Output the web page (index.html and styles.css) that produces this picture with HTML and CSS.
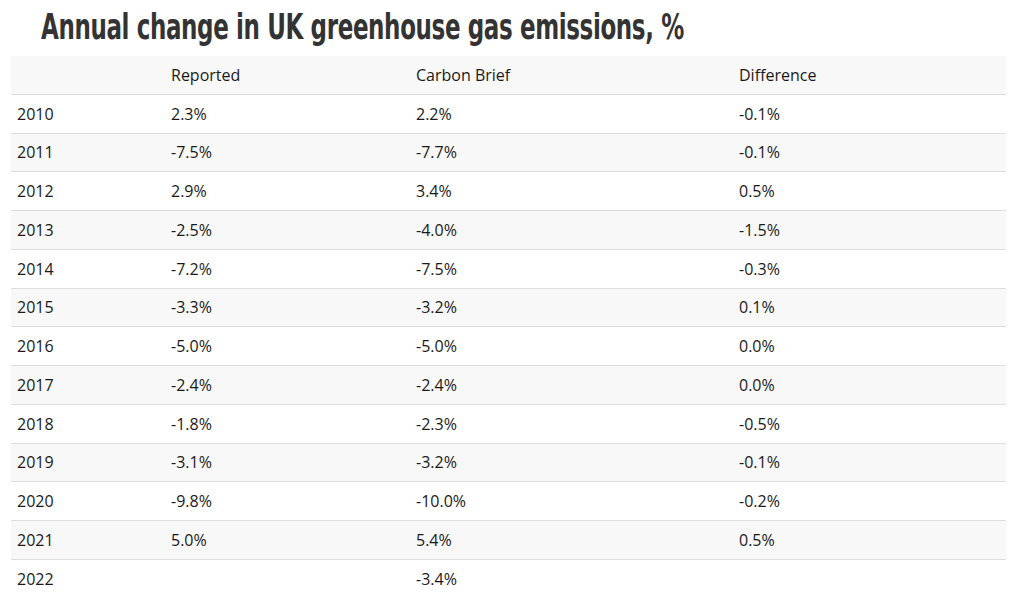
FILE: index.html
```html
<!DOCTYPE html>
<html>
<head>
<meta charset="utf-8">
<link rel="stylesheet" href="styles.css">
</head>
<body>
<h1 class="title"><span class="title-text">Annual change in UK greenhouse gas emissions, %</span></h1>
<table class="data">
<colgroup><col class="c1"><col class="c2"><col class="c3"><col class="c4"></colgroup>
<thead><tr><th></th><th>Reported</th><th>Carbon Brief</th><th>Difference</th></tr></thead>
<tbody>
<tr><td>2010</td><td>2.3%</td><td>2.2%</td><td>-0.1%</td></tr>
<tr><td>2011</td><td>-7.5%</td><td>-7.7%</td><td>-0.1%</td></tr>
<tr><td>2012</td><td>2.9%</td><td>3.4%</td><td>0.5%</td></tr>
<tr><td>2013</td><td>-2.5%</td><td>-4.0%</td><td>-1.5%</td></tr>
<tr><td>2014</td><td>-7.2%</td><td>-7.5%</td><td>-0.3%</td></tr>
<tr><td>2015</td><td>-3.3%</td><td>-3.2%</td><td>0.1%</td></tr>
<tr><td>2016</td><td>-5.0%</td><td>-5.0%</td><td>0.0%</td></tr>
<tr><td>2017</td><td>-2.4%</td><td>-2.4%</td><td>0.0%</td></tr>
<tr><td>2018</td><td>-1.8%</td><td>-2.3%</td><td>-0.5%</td></tr>
<tr><td>2019</td><td>-3.1%</td><td>-3.2%</td><td>-0.1%</td></tr>
<tr><td>2020</td><td>-9.8%</td><td>-10.0%</td><td>-0.2%</td></tr>
<tr><td>2021</td><td>5.0%</td><td>5.4%</td><td>0.5%</td></tr>
<tr><td>2022</td><td></td><td>-3.4%</td><td></td></tr>
</tbody>
</table>
</body>
</html>
```
FILE: styles.css
```css
html, body { margin: 0; padding: 0; background: #fff; }
body { padding: 0 16px 0 11px; }
.title {
  margin: 6px 0 0 30px;
  font-family: "DejaVu Sans Condensed", "Liberation Sans", sans-serif;
  font-stretch: condensed;
  font-weight: bold;
  font-size: 35px;
  line-height: 42px;
  height: 50px;
  color: #333;
  white-space: nowrap;
}
.title-text {
  display: inline-block;
  transform: scaleX(0.73);
  transform-origin: left center;
  letter-spacing: -0.5px;
}
.data {
  width: 995px;
  border-collapse: collapse;
  font-family: "Open Sans", "Liberation Sans", sans-serif;
  font-size: 16px;
  color: #1a1a1a;
  table-layout: fixed;
}
.c1 { width: 154px; }
.c2 { width: 245px; }
.c3 { width: 323px; }
.c4 { width: 273px; }
.data th, .data td {
  text-align: left;
  font-weight: normal;
  padding: 0 6px;
  height: 37.75px;
  border-bottom: 1px solid #ddd;
}
.data thead tr { background: #f8f8f8; }
.data tbody tr:nth-child(even) { background: #f8f8f8; }
.data tbody tr:last-child td { border-bottom: none; }
```
